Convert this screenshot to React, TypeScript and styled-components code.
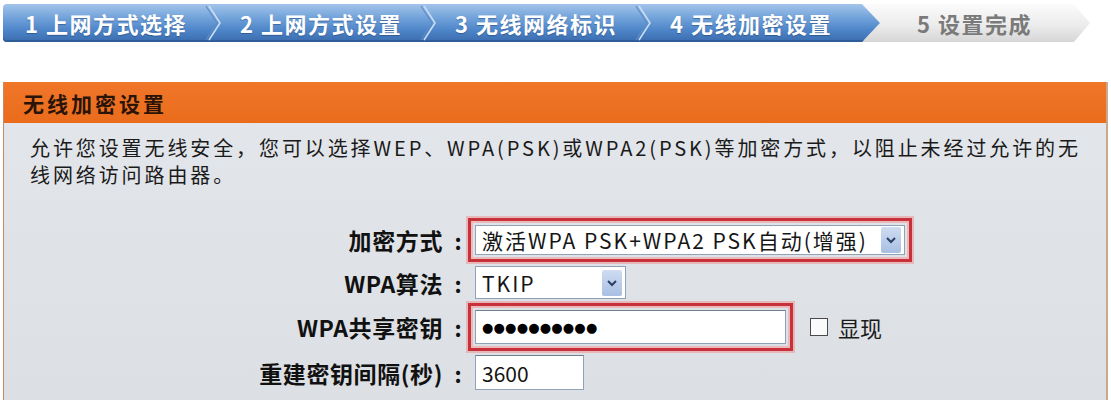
import React from "react";
import styled, { createGlobalStyle } from "styled-components";

const GlobalStyle = createGlobalStyle`
  body {
    margin: 0;
    background: #ffffff;
    font-family: "Noto Sans CJK SC", "Noto Sans", sans-serif;
  }
`;

const Page = styled.div`
  width: 1111px;
  height: 400px;
  overflow: hidden;
  display: flex;
  flex-direction: column;
`;

const StepBar = styled.div`
  display: flex;
  height: 38px;
  margin: 4px 0 0 3px;
`;

const BlueTrack = styled.div`
  position: relative;
  z-index: 1;
  display: flex;
  align-items: center;
  padding-right: 34px;
  border-radius: 4px 0 0 4px;
  background: linear-gradient(#a3c4ea 0%, #6d9fd8 40%, #4d84c8 70%, #3a6cae 100%);
  box-shadow: inset 0 -2px 0 #2f5d9a;
  clip-path: polygon(0 0, calc(100% - 18px) 0, 100% 50%, calc(100% - 18px) 100%, 0 100%);
`;

const GreyTrack = styled.div`
  display: flex;
  align-items: center;
  width: 230px;
  margin-left: -20px;
  padding-left: 35px;
  box-sizing: border-box;
  background: linear-gradient(#fbfbfb 0%, #ececec 55%, #d6d6d6 100%);
  clip-path: polygon(0 0, calc(100% - 16px) 0, 100% 50%, calc(100% - 16px) 100%, 0 100%);
`;

const Step = styled.span<{ $done?: boolean }>`
  padding: 0 14px 0 13px;
  font-size: 22px;
  font-weight: 700;
  letter-spacing: 1.5px;
  white-space: nowrap;
  color: ${(p) => (p.$done ? "#ffffff" : "#7a7a7a")};
  text-shadow: ${(p) => (p.$done ? "0 1px 1px rgba(20, 50, 100, 0.45)" : "none")};

  &:first-child {
    padding-left: 22px;
  }
`;

const Chevron = () => (
  <svg width="26" height="38" viewBox="0 0 26 38">
    <path d="M8 2 L19 19 L8 36" fill="none" stroke="#c9dcf3" strokeWidth="1.6" />
    <path d="M5 2 L16 19 L5 36" fill="none" stroke="#5d8cc6" strokeWidth="1.2" />
  </svg>
);

const Panel = styled.section`
  flex: 1;
  display: flex;
  flex-direction: column;
  margin: 40px 3px 0 3px;
  border-left: 1px solid #c98a60;
  border-right: 2px solid #c9a88e;
`;

const PanelHeader = styled.h2`
  margin: 0;
  height: 41px;
  display: flex;
  align-items: center;
  padding-left: 19px;
  background: linear-gradient(#f0762a, #ea6c1b);
  color: #2a1408;
  font-size: 21px;
  font-weight: 700;
  letter-spacing: 3px;
`;

const PanelBody = styled.div`
  flex: 1;
  padding: 11px 0 0 26px;
  background: linear-gradient(#e2e5e9, #dcdfe3);
`;

const Intro = styled.p`
  margin: 0;
  font-size: 20px;
  line-height: 27px;
  letter-spacing: 2.9px;
  color: #1a1a1a;
`;

const Form = styled.div`
  display: grid;
  grid-template-columns: 418px 20px auto;
  align-items: center;
  row-gap: 1px;
  margin-top: 30px;
`;

const Label = styled.div`
  text-align: right;
  padding-right: 5px;
  font-size: 23px;
  font-weight: 700;
  letter-spacing: 0.6px;
  color: #111;
  white-space: nowrap;
`;

const Colon = styled.div`
  text-align: center;
  font-size: 22px;
  font-weight: 700;
  color: #111;
`;

const Control = styled.div`
  display: flex;
  align-items: center;
`;

const Field = styled.div<{ $highlight?: boolean }>`
  display: inline-flex;
  border: ${(p) => (p.$highlight ? "3px solid #c8303a" : "none")};
  padding: ${(p) => (p.$highlight ? "4px" : "3px 7px")};
  box-shadow: ${(p) =>
    p.$highlight
      ? "0 0 0 2px rgba(236, 150, 150, 0.55), inset 0 0 0 2px rgba(240, 170, 170, 0.7)"
      : "none"};
`;

const SelectBox = styled.div<{ $w: number; $h: number }>`
  width: ${(p) => p.$w}px;
  height: ${(p) => p.$h}px;
  box-sizing: border-box;
  display: flex;
  align-items: center;
  justify-content: space-between;
  padding-left: 6px;
  background: #fff;
  border: 1px solid #8ea3b8;
  font-size: 21px;
  letter-spacing: 2px;
  color: #151515;
  white-space: nowrap;
`;

const ArrowButton = styled.span`
  display: flex;
  align-items: center;
  justify-content: center;
  width: 20px;
  height: 26px;
  margin-right: 3px;
  border-radius: 2px;
  background: linear-gradient(#cfdcf1, #a8bfe3);
`;

const TextInput = styled.div<{ $w: number; $h: number }>`
  width: ${(p) => p.$w}px;
  height: ${(p) => p.$h}px;
  box-sizing: border-box;
  display: flex;
  align-items: center;
  padding-left: 6px;
  background: #fff;
  border: 1px solid #8ea3b8;
  border-top-color: #6f7f8f;
  font-size: 21px;
  color: #151515;
`;

const Dots = styled.span`
  font-family: "DejaVu Sans", sans-serif;
  font-size: 13px;
  letter-spacing: 0.2px;
  color: #000;
`;

const CheckBox = styled.span`
  width: 18px;
  height: 18px;
  margin-left: 17px;
  box-sizing: border-box;
  border: 1px solid #4a4a4a;
  background: #fafafa;
`;

const CheckLabel = styled.span`
  margin-left: 10px;
  font-size: 22px;
  color: #1a1a1a;
`;

const Select = ({ value, w, h }: { value: string; w: number; h: number }) => (
  <SelectBox $w={w} $h={h}>
    {value}
    <ArrowButton>
      <svg width="12" height="8" viewBox="0 0 12 8">
        <path d="M2 2 L6 6 L10 2" fill="none" stroke="#2b3f66" strokeWidth="2" />
      </svg>
    </ArrowButton>
  </SelectBox>
);

const steps = ["1 上网方式选择", "2 上网方式设置", "3 无线网络标识", "4 无线加密设置"];

export default function App() {
  return (
    <Page>
      <GlobalStyle />
      <StepBar>
        <BlueTrack>
          {steps.map((s, i) => (
            <React.Fragment key={s}>
              {i > 0 && <Chevron />}
              <Step $done>{s}</Step>
            </React.Fragment>
          ))}
        </BlueTrack>
        <GreyTrack>
          <Step>5 设置完成</Step>
        </GreyTrack>
      </StepBar>

      <Panel>
        <PanelHeader>无线加密设置</PanelHeader>
        <PanelBody>
          <Intro>
            允许您设置无线安全，您可以选择WEP、WPA(PSK)或WPA2(PSK)等加密方式，以阻止未经过允许的无
            <br />
            线网络访问路由器。
          </Intro>

          <Form>
            <Label>加密方式</Label>
            <Colon>:</Colon>
            <Control>
              <Field $highlight>
                <Select value="激活WPA PSK+WPA2 PSK自动(增强)" w={430} h={30} />
              </Field>
            </Control>

            <Label>WPA算法</Label>
            <Colon>:</Colon>
            <Control>
              <Field>
                <Select value="TKIP" w={151} h={33} />
              </Field>
            </Control>

            <Label>WPA共享密钥</Label>
            <Colon>:</Colon>
            <Control>
              <Field $highlight>
                <TextInput $w={311} $h={34}>
                  <Dots>●●●●●●●●●●</Dots>
                </TextInput>
              </Field>
              <CheckBox />
              <CheckLabel>显现</CheckLabel>
            </Control>

            <Label>重建密钥间隔(秒)</Label>
            <Colon>:</Colon>
            <Control>
              <Field>
                <TextInput $w={109} $h={35}>3600</TextInput>
              </Field>
            </Control>
          </Form>
        </PanelBody>
      </Panel>
    </Page>
  );
}
